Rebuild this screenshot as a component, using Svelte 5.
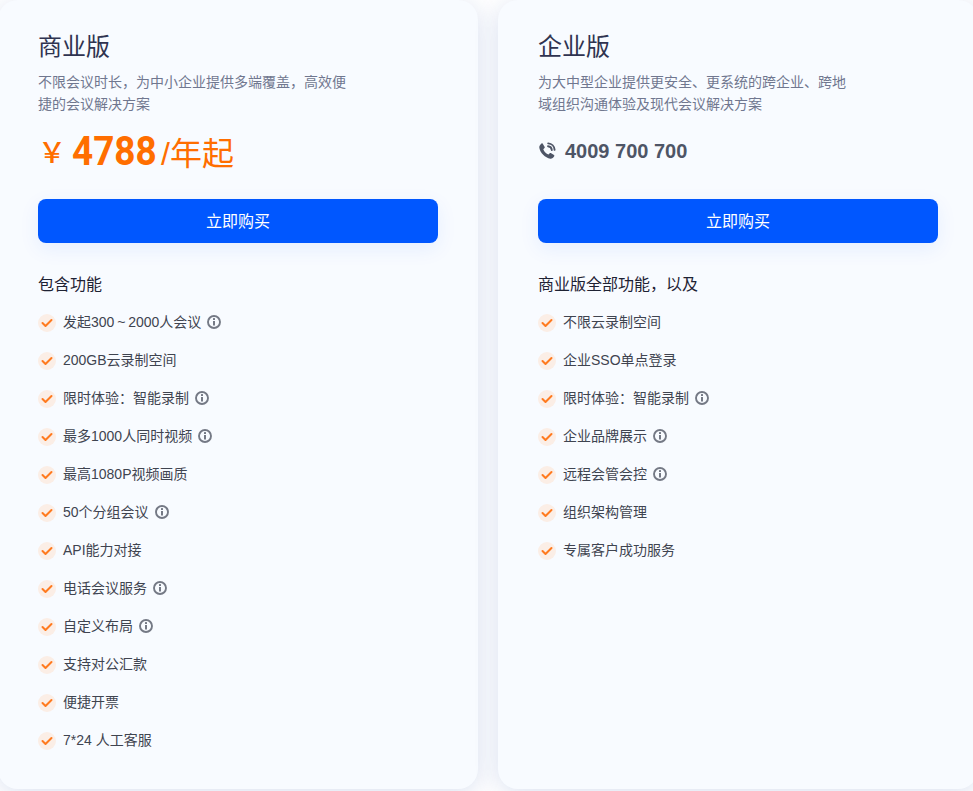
<script>
	const comma = '\uFF0C';
	const colon = '\uFF1A';
	const tilde = '\u2009~\u2009';

	const plans = [
		{
			name: '商业版',
			desc: [`不限会议时长${comma}为中小企业提供多端覆盖${comma}高效便`, '捷的会议解决方案'],
			price: true,
			heading: '包含功能',
			items: [
				[`发起300${tilde}2000人会议`, true],
				['200GB云录制空间', false],
				[`限时体验${colon}智能录制`, true],
				['最多1000人同时视频', true],
				['最高1080P视频画质', false],
				['50个分组会议', true],
				['API能力对接', false],
				['电话会议服务', true],
				['自定义布局', true],
				['支持对公汇款', false],
				['便捷开票', false],
				['7*24 人工客服', false]
			]
		},
		{
			name: '企业版',
			desc: ['为大中型企业提供更安全、更系统的跨企业、跨地', '域组织沟通体验及现代会议解决方案'],
			price: false,
			heading: `商业版全部功能${comma}以及`,
			items: [
				['不限云录制空间', false],
				['企业SSO单点登录', false],
				[`限时体验${colon}智能录制`, true],
				['企业品牌展示', true],
				['远程会管会控', true],
				['组织架构管理', false],
				['专属客户成功服务', false]
			]
		}
	];
</script>

<div class="plans">
	{#each plans as plan}
		<section class="card">
			<h2 class="card-title">{plan.name}</h2>
			<p class="card-desc">
				{#each plan.desc as line}
					<span>{line}</span>
				{/each}
			</p>

			{#if plan.price}
				<div class="price">
					<span class="price-sign">{'\uFFE5'}</span>
					<span class="price-num">4788</span>
					<span class="price-unit">/年起</span>
				</div>
			{:else}
				<div class="phone">
					<svg width="18" height="18" viewBox="0 0 18 18" fill="none">
						<path d="M4.600 1.600 6.700 5c.2.400.1.800-.2 1.100L5.300 7.200c.7 2.200 3 4.500 5.200 5.300l1.200-1.200c.3-.3.7-.4 1.100-.2l3.200 2c.4.3.5.800.2 1.200-.9 1.600-2.300 2.600-3.900 2.400C7.300 15.900 2 10.500 1.300 5.700 1.100 4 2.100 2.500 3.500 1.400c.4-.3.900-.2 1.100.2Z" fill="#4e5566"/>
						<path d="M10 4.200c2 .2 3.600 1.800 3.800 3.800M10.200 1.400c3.500.2 6.200 3 6.400 6.500" stroke="#4e5566" stroke-width="1.900" stroke-linecap="round"/>
					</svg>
					<span>4009 700 700</span>
				</div>
			{/if}

			<button class="buy">立即购买</button>

			<h3 class="features-title">{plan.heading}</h3>
			<ul class="features">
				{#each plan.items as [label, hasInfo]}
					<li>
						<span class="check">
							<svg width="12" height="10" viewBox="0 0 12 10" fill="none">
								<path d="M1.500 5 4.500 8 10.500 2" stroke="#ff7a1f" stroke-width="2" stroke-linecap="round" stroke-linejoin="round"/>
							</svg>
						</span>
						<span class="label">{label}</span>
						{#if hasInfo}
							<svg class="info" width="14" height="14" viewBox="0 0 14 14" fill="none">
								<circle cx="7" cy="7" r="6" stroke="#747985" stroke-width="1.900"/>
								<rect x="6" y="6" width="2" height="4.500" fill="#747985"/>
								<rect x="6" y="3.100" width="2" height="1.900" fill="#747985"/>
							</svg>
						{/if}
					</li>
				{/each}
			</ul>
		</section>
	{/each}
</div>

<style>
	:global(body) {
		margin: 0;
		background: #fff;
		overflow: hidden;
		font-family: "Liberation Sans", "Noto Sans CJK SC", sans-serif;
	}

	.plans {
		display: flex;
		gap: 20px;
		width: 980px;
		margin-left: -2px;
		height: 791px;
		overflow: hidden;
	}

	.card {
		flex: 0 0 480px;
		box-sizing: border-box;
		height: 789px;
		padding: 31px 40px 0;
		border-radius: 20px;
		background: #f8fbff;
		box-shadow: 0 4px 24px rgba(24, 70, 160, 0.16);
	}

	.card-title {
		margin: 0;
		font-size: 24px;
		font-weight: 400;
		line-height: 32px;
		color: #2f3350;
	}

	.card-desc {
		margin: 8px 0 0;
		font-size: 14px;
		line-height: 22px;
		color: #70778f;
	}

	.card-desc span {
		display: block;
	}

	.price {
		display: flex;
		align-items: center;
		height: 46px;
		margin-top: 13px;
		color: #ff6e00;
	}

	.price-sign {
		font-family: "Noto Sans CJK SC", sans-serif;
		font-size: 28px;
		font-weight: 500;
	}

	.price-num {
		width: 85px;
		margin-left: 6px;
		font-family: Roboto, sans-serif;
		font-size: 41px;
		font-weight: 700;
		transform: scaleX(0.9);
		transform-origin: left center;
	}

	.price-unit {
		margin-left: 4px;
		font-size: 32px;
	}

	.phone {
		display: flex;
		align-items: center;
		gap: 9px;
		height: 46px;
		margin-top: 13px;
		font-size: 20px;
		font-weight: 700;
		color: #4e5566;
	}

	.buy {
		display: block;
		width: 400px;
		height: 44px;
		margin-top: 25px;
		padding: 0 0 2px;
		border: 0;
		border-radius: 8px;
		background: #0057ff;
		box-shadow: 0 6px 20px rgba(0, 87, 255, 0.08);
		font: inherit;
		font-size: 16px;
		color: #fff;
	}

	.features-title {
		margin: 30px 0 0;
		font-size: 16px;
		font-weight: 400;
		line-height: 24px;
		color: #1e2233;
	}

	.features {
		margin: 7px 0 0;
		padding: 0;
		list-style: none;
	}

	.features li {
		display: flex;
		align-items: center;
		height: 38px;
		font-size: 14px;
		color: #3f4450;
	}

	.check {
		display: flex;
		align-items: center;
		justify-content: center;
		width: 18px;
		height: 18px;
		margin-right: 7px;
		border-radius: 50%;
		background: #fbeee6;
	}

	.label {
		margin-top: -4px;
	}

	.info {
		margin: -2px 0 0 6px;
	}
</style>
